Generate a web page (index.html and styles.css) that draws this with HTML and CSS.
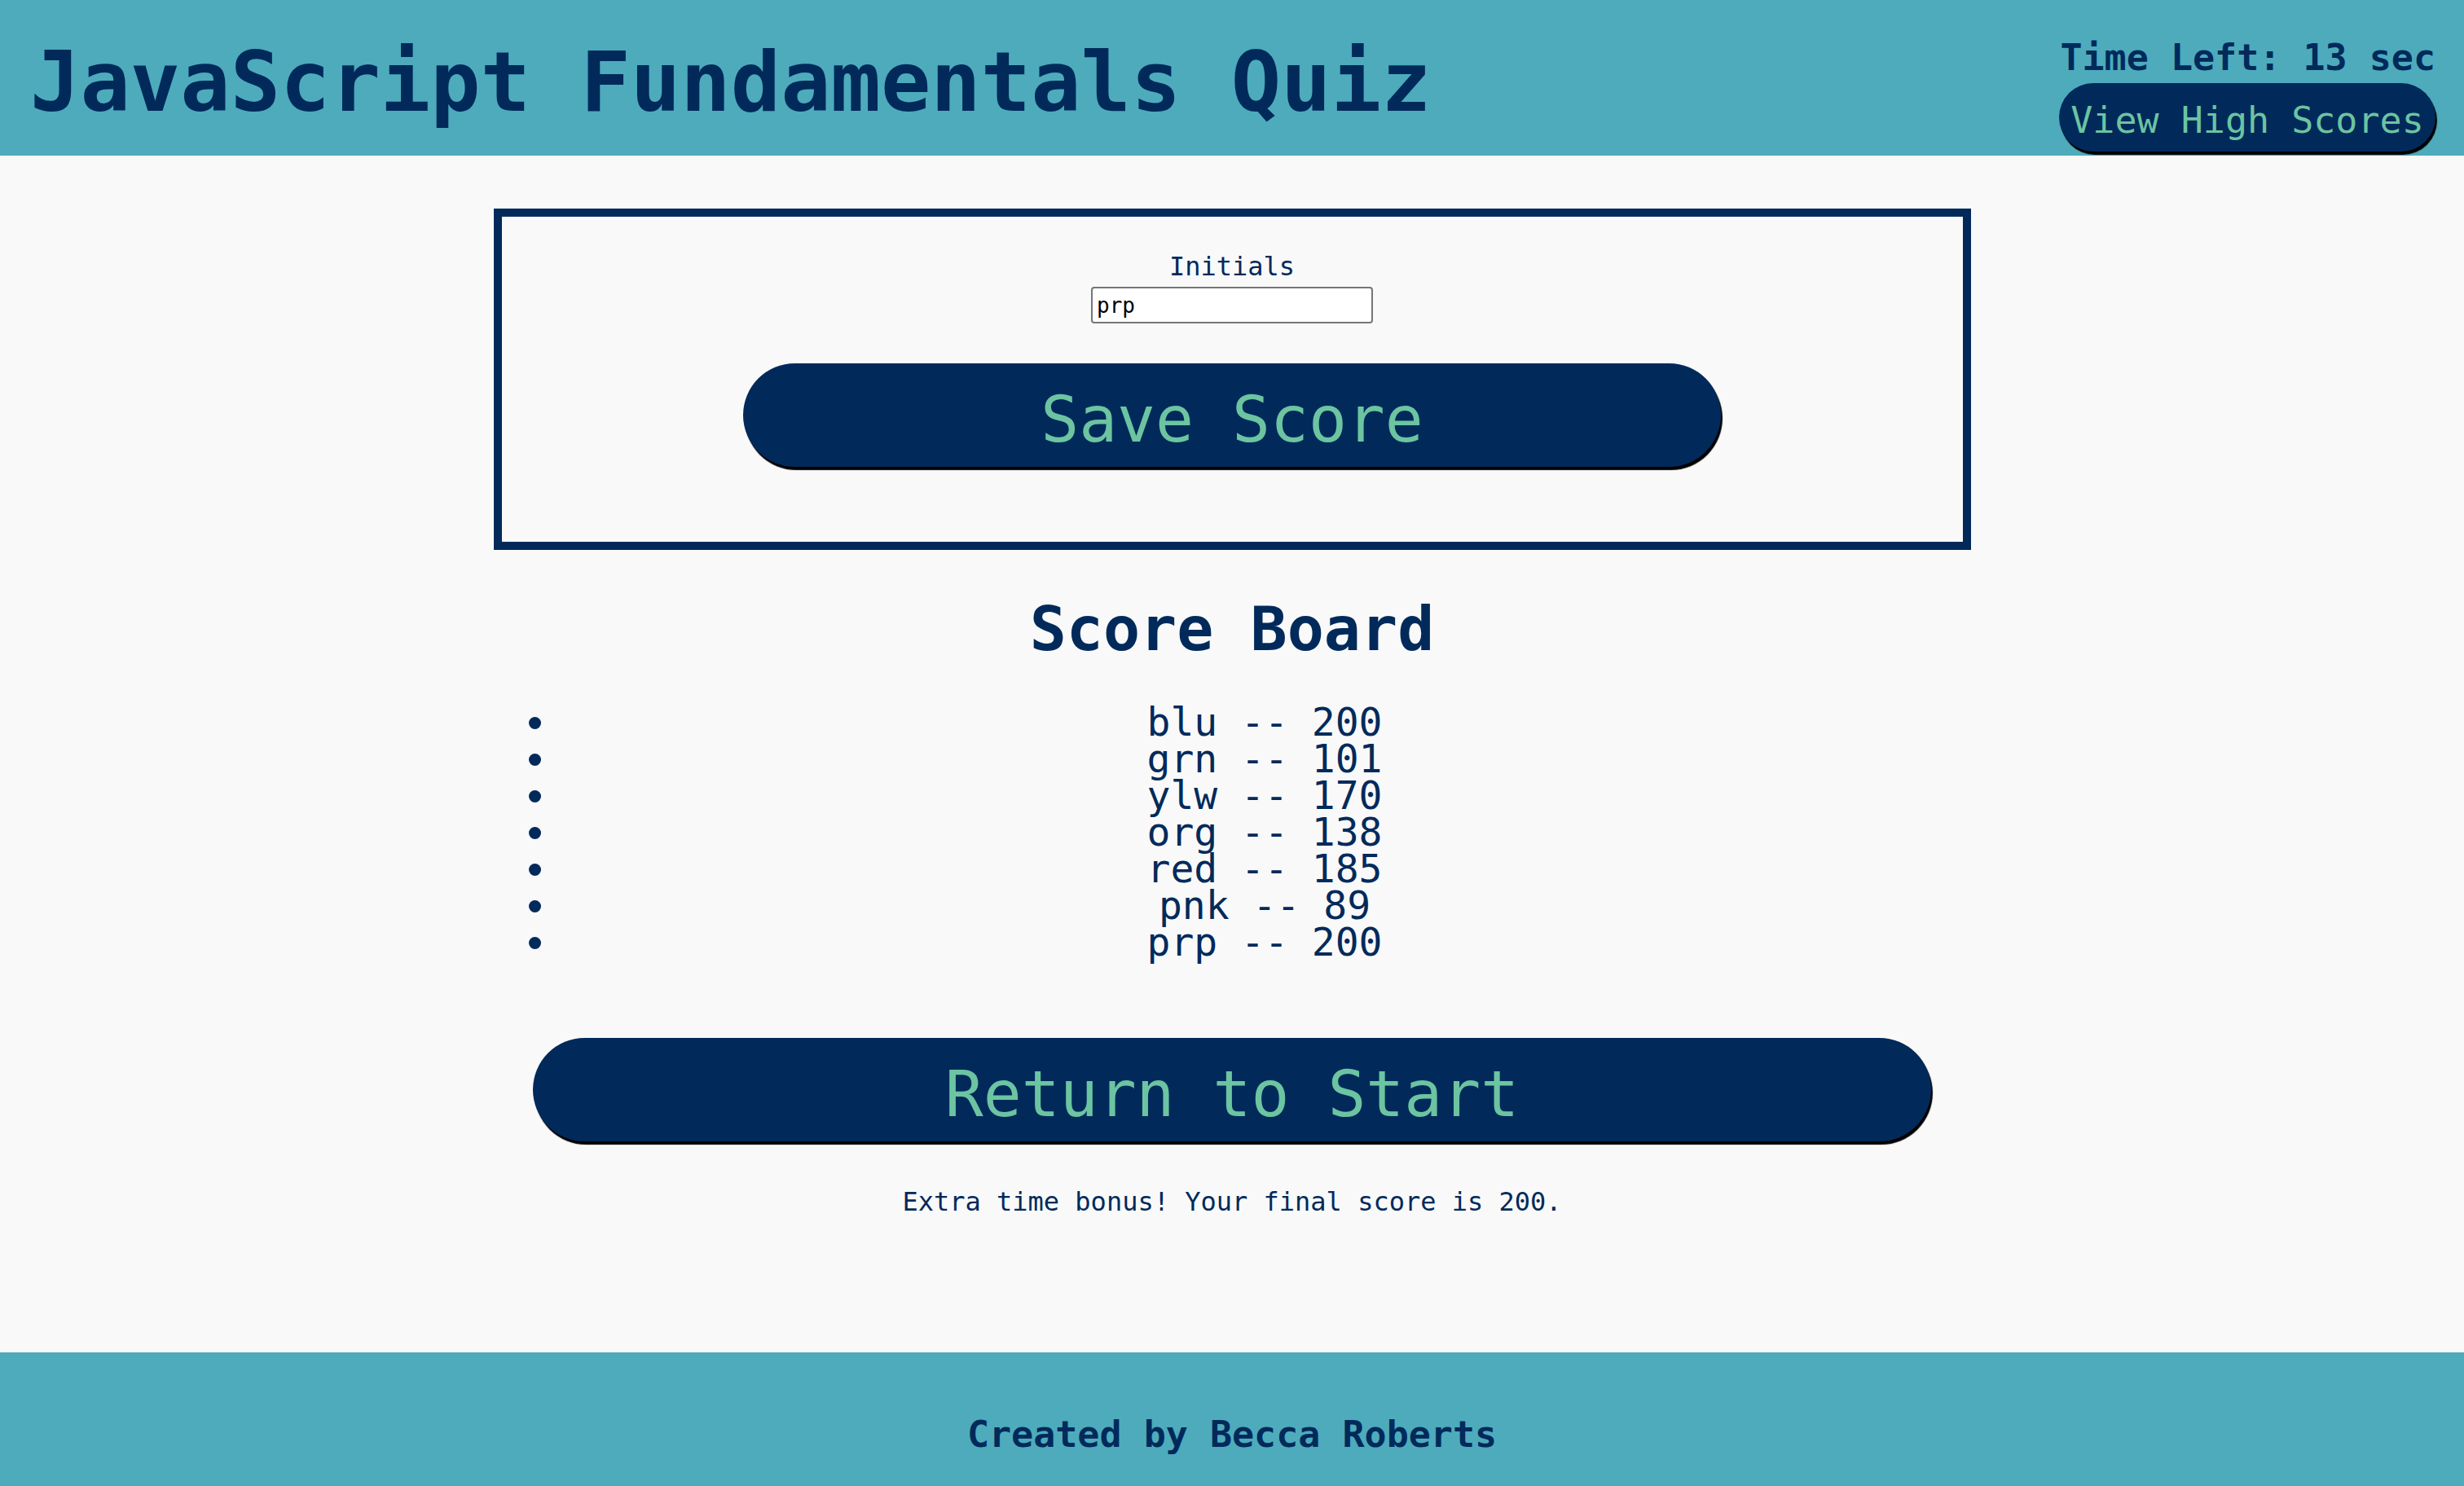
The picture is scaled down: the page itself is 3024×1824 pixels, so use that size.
FILE: index.html
```html
<!DOCTYPE html>
<html lang="en">
<head>
<meta charset="utf-8">
<title>JavaScript Fundamentals Quiz</title>
<link rel="stylesheet" href="styles.css">
</head>
<body>
<header class="site-header">
  <h1 class="title">JavaScript Fundamentals Quiz</h1>
  <div class="header-side">
    <p class="timer">Time Left: 13 sec</p>
    <button class="btn btn-small" type="button">View High Scores</button>
  </div>
</header>
<main class="content">
  <form class="score-form">
    <label class="field-label" for="initials">Initials</label>
    <input id="initials" class="field-input" type="text" value="prp">
    <button class="btn btn-large btn-save" type="button">Save Score</button>
  </form>
  <h2 class="board-title">Score Board</h2>
  <ul class="score-list">
    <li>blu -- 200</li>
    <li>grn -- 101</li>
    <li>ylw -- 170</li>
    <li>org -- 138</li>
    <li>red -- 185</li>
    <li>pnk -- 89</li>
    <li>prp -- 200</li>
  </ul>
  <button class="btn btn-large btn-return" type="button">Return to Start</button>
  <p class="bonus">Extra time bonus! Your final score is 200.</p>
</main>
<footer class="site-footer">
  <p class="credit">Created by Becca Roberts</p>
</footer>
</body>
</html>
```
FILE: styles.css
```css
* {
  box-sizing: border-box;
}

html, body {
  margin: 0;
  padding: 0;
}

body {
  min-height: 100vh;
  display: flex;
  flex-direction: column;
  background: #f9f9f9;
  color: #012a5b;
  font-family: "DejaVu Sans Mono", "Liberation Mono", monospace;
}

.site-header {
  height: 191px;
  flex: none;
  background: #4dabbc;
  display: flex;
  justify-content: space-between;
  align-items: flex-start;
  padding: 0 35px 0 37px;
}

.title {
  margin: 41px 0 0;
  font-size: 102px;
  line-height: 119px;
  font-weight: bold;
  color: #012a5b;
  white-space: nowrap;
}

.header-side {
  display: flex;
  flex-direction: column;
  align-items: flex-end;
}

.timer {
  margin: 45px 0 0;
  font-size: 45px;
  line-height: 52px;
  font-weight: bold;
  color: #012a5b;
  white-space: nowrap;
}

.btn {
  display: block;
  border: none;
  background: #012a5b;
  color: #6cc4a1;
  font-family: "DejaVu Sans Mono", "Liberation Mono", monospace;
  white-space: nowrap;
  cursor: pointer;
  box-shadow: 2px 4px 1px #000;
}

.btn-small {
  margin-top: 5px;
  height: 84px;
  width: 462px;
  padding: 7px 0 0;
  font-size: 45px;
  line-height: 77px;
  border-radius: 42px;
}

.btn-large {
  height: 127px;
  padding: 11px 0 0;
  font-size: 78px;
  line-height: 116px;
  border-radius: 64px;
}

.content {
  flex: 1;
  display: flex;
  flex-direction: column;
  align-items: center;
}

.score-form {
  margin-top: 65px;
  width: 1813px;
  border: 10px solid #012a5b;
  padding: 43px 0 92px;
  display: flex;
  flex-direction: column;
  align-items: center;
}

.field-label {
  display: block;
  font-size: 32px;
  line-height: 37px;
  color: #012a5b;
}

.field-input {
  display: block;
  margin-top: 6px;
  width: 346px;
  height: 45px;
  border: 2px solid #767676;
  border-radius: 4px;
  padding: 0 5px;
  background: #fff;
  color: #000;
  font-family: "DejaVu Sans Mono", "Liberation Mono", monospace;
  font-size: 26px;
}

.btn-save {
  margin-top: 49px;
  width: 1200px;
}

.board-title {
  margin: 54px 0 48px;
  font-size: 75px;
  line-height: 87px;
  font-weight: bold;
  color: #012a5b;
}

.score-list {
  margin: 0;
  width: 1813px;
  padding: 0 0 0 80px;
  list-style: disc outside;
  font-size: 48px;
  line-height: 45px;
  color: #012a5b;
}

.score-list li {
  text-align: center;
  white-space: pre;
}

.btn-return {
  margin-top: 95px;
  width: 1716px;
}

.bonus {
  margin: 56px 0 0;
  font-size: 32px;
  line-height: 37px;
  color: #012a5b;
}

.site-footer {
  flex: none;
  height: 164px;
  background: #4dabbc;
  padding-top: 75px;
  text-align: center;
}

.credit {
  margin: 0;
  font-size: 45px;
  line-height: 52px;
  font-weight: bold;
  color: #012a5b;
}
```
